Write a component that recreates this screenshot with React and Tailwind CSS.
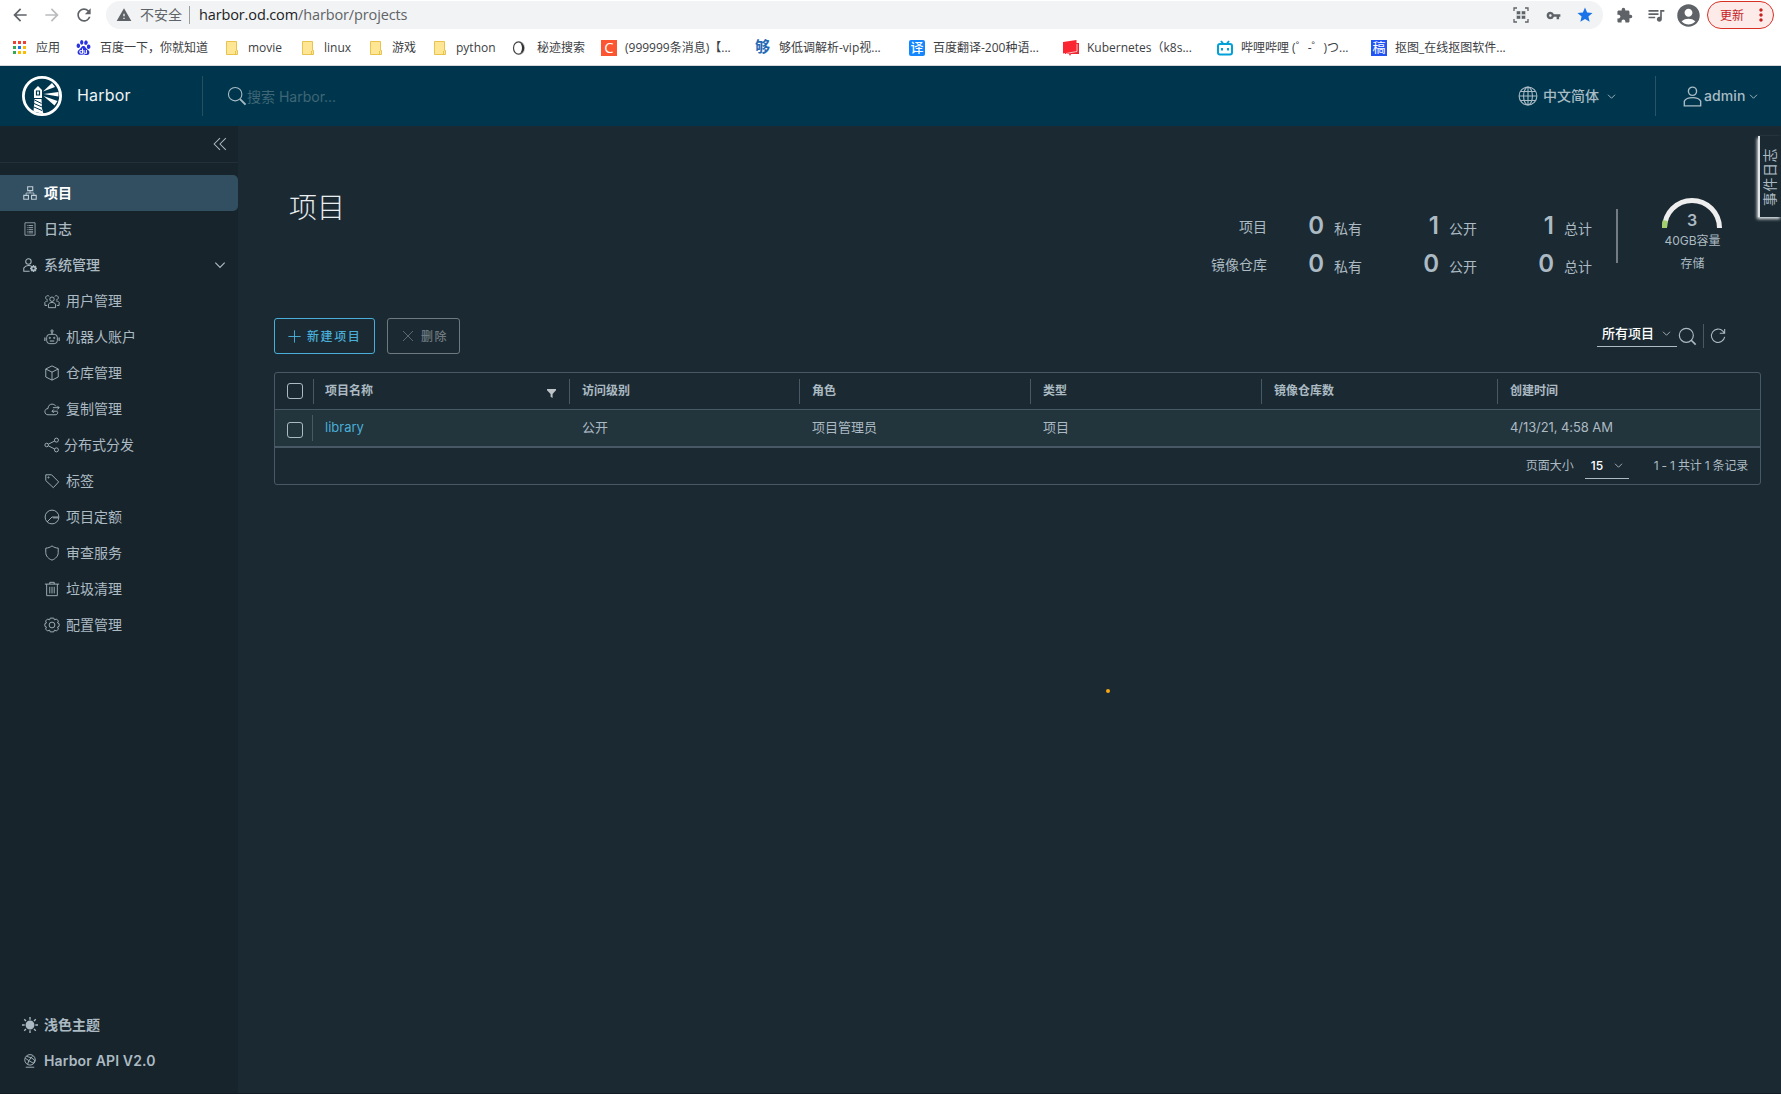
import React from 'react';
import { MdArrowBack, MdArrowForward, MdRefresh, MdWarning, MdVpnKey, MdStar, MdExtension, MdQueueMusic, MdAccountCircle, MdMoreVert } from 'react-icons/md';
import { SiBaidu } from 'react-icons/si';

function Icon({ children, className = 'h-4 w-4', width = 2 }) {
  return (
    <svg viewBox="0 0 36 36" className={`${className} shrink-0`} fill="none" stroke="currentColor" strokeWidth={width}>
      {children}
    </svg>
  );
}

function Chevron({ className }) {
  return (
    <Icon className={className} width={3.6}>
      <path d="M4 11l14 14 14-14" />
    </Icon>
  );
}

const icons = {
  projects: (
    <>
      <path d="M12 2h13v10H12zM2 24h12v10H2zM22 24h12v10H22z" strokeWidth="2.800" />
      <path d="M18 13v5M8 24v-6h20v6" />
    </>
  ),
  logs: (
    <>
      <path d="M5 2h26v32H5z" />
      <path d="M10 9h2M14 9h12M10 14h2M14 14h12M10 19h2M14 19h12M10 24h2M14 24h12M10 28h2M14 28h12" />
    </>
  ),
  admin: (
    <>
      <circle cx="14" cy="9" r="7" strokeWidth="2.600" />
      <path d="M17 34H2v-8c3-5 7-7 12-7 2 0 4 .4 6 1" strokeWidth="2.600" />
      <circle cx="27" cy="27" r="5" strokeWidth="4.500" />
      <path d="M27 18v3M27 33v3M18 27h3M33 27h3M20.600 20.600l2 2M31.400 31.400l2 2M20.600 33.400l2-2M31.400 22.600l2-2" strokeWidth="3.500" />
    </>
  ),
  users: (
    <>
      <circle cx="18" cy="14" r="5" />
      <path d="M10 33v-8c4-5 12-5 16 0v8z" />
      <path d="M12 8a4.500 4.500 0 1 0-4 7M24 8a4.500 4.500 0 1 1 4 7M7 28H2v-7c2-3 5-3 7-3M29 28h5v-7c-2-3-5-3-7-3" />
    </>
  ),
  robot: (
    <>
      <rect x="6" y="12" width="24" height="21" rx="7" />
      <path d="M18 12V7M2 19v8M34 19v8M13 27h10" strokeWidth="2.500" />
      <circle cx="18" cy="4.500" r="2.500" />
      <circle cx="13" cy="20" r="1.500" />
      <circle cx="23" cy="20" r="1.500" />
    </>
  ),
  registry: (
    <>
      <path d="M18 2l14 7v18l-14 7-14-7V9zM4 9l14 7 14-7M18 16v18" />
    </>
  ),
  replication: (
    <>
      <path d="M31 25c0 4-2 6-6 6H9c-4 0-7-3-7-7s3-7 7-7c0-6 4-10 9-10 4 0 7 2 9 5" />
      <path d="M20 15h14M30 11l4 4-4 4M31 23H18M22 19l-4 4 4 4" />
    </>
  ),
  share: (
    <>
      <circle cx="6" cy="18" r="4" />
      <circle cx="28" cy="7" r="4.500" />
      <circle cx="28" cy="29" r="4.500" />
      <path d="M10 16l14-7M10 20l14 7" />
    </>
  ),
  tag: (
    <>
      <path d="M4 4h13l16 16-12 13L4 17z" />
      <circle cx="10" cy="10" r="1.300" />
    </>
  ),
  quota: (
    <>
      <circle cx="18" cy="18" r="15.500" />
      <path d="M7 29l11-11h15" />
      <path d="M20 20h12" />
    </>
  ),
  shield: <path d="M18 2c4 3 9 5 14 5v10c0 8-6 14-14 17C10 31 4 25 4 17V7c5 0 10-2 14-5z" />,
  trash: (
    <>
      <path d="M2 7h32M6 7v26h24V7M13 7V3h10v4M13 13v15M18 13v15M23 13v15" />
    </>
  ),
  cog: (
    <>
      <circle cx="18" cy="18" r="6.500" />
      <path d="M14 2.500h8l1.500 4 4.500-2 4.500 4.500-2 4.500 3.500 1.500v6l-3.500 1.500 2 4.500-4.500 4.500-4.500-2-1.500 4h-8l-1.500-4-4.500 2L3.500 27l2-4.500L2 21v-6l3.500-1.500-2-4.500L8 4.500l4.500 2z" />
    </>
  ),
};

const subItems = [
  { icon: 'users', label: '用户管理' },
  { icon: 'robot', label: '机器人账户' },
  { icon: 'registry', label: '仓库管理' },
  { icon: 'replication', label: '复制管理' },
  { icon: 'share', label: '分布式分发' },
  { icon: 'tag', label: '标签' },
  { icon: 'quota', label: '项目定额' },
  { icon: 'shield', label: '审查服务' },
  { icon: 'trash', label: '垃圾清理' },
  { icon: 'cog', label: '配置管理' },
];

function Folder() {
  return (
    <svg viewBox="0 0 12 14" className="h-3.5 w-3">
      <path d="M.5.5h10v9h1v4H.5z" fill="#ffe694" stroke="#e8c34d" />
      <path d="M9.500 10v3.500" stroke="#e8c34d" />
    </svg>
  );
}

function AppsGrid() {
  const colors = ['#ea4335', '#ea4335', '#ea4335', '#34a853', '#1a73e8', '#fbbc04', '#34a853', '#fbbc04', '#fbbc04'];
  return (
    <div className="grid w-[13px] grid-cols-3 gap-[2px]">
      {colors.map((c, i) => (
        <span key={i} className="h-[3px] w-[3px]" style={{ backgroundColor: c }} />
      ))}
    </div>
  );
}

const bookmarks = [
  { w: 'w-[63px]', iw: 'w-[23px]', icon: <AppsGrid />, label: '应用' },
  { w: 'w-[150px]', iw: 'w-[24px]', icon: <SiBaidu className="h-[15px] w-[15px] text-[#2932e1]" />, label: '百度一下，你就知道' },
  { w: 'w-[76px]', iw: 'w-[22px]', icon: <Folder />, label: 'movie' },
  { w: 'w-[68px]', iw: 'w-[22px]', icon: <Folder />, label: 'linux' },
  { w: 'w-[64px]', iw: 'w-[22px]', icon: <Folder />, label: '游戏' },
  { w: 'w-[78px]', iw: 'w-[22px]', icon: <Folder />, label: 'python' },
  {
    w: 'w-[89px]',
    iw: 'w-[25px]',
    icon: (
      <svg viewBox="0 0 16 16" className="h-4 w-4">
        <path d="M7 1.500c8-1 8 14 0 13z" fill="#c9c9c9" />
        <ellipse cx="6.500" cy="8" rx="5" ry="6.200" fill="#fff" stroke="#444" strokeWidth="1.200" />
        <path d="M8.500 3c5 2 5 8 0 10 2-3 2-7 0-10z" fill="#333" />
      </svg>
    ),
    label: '秘迹搜索',
  },
  { w: 'w-[154px]', iw: 'w-[24px]', icon: <span className="flex h-4 w-4 items-center justify-center bg-[#fc5531] text-[15px] leading-none font-medium text-white">C</span>, label: '(999999条消息)【...' },
  { w: 'w-[154px]', iw: 'w-[24px]', icon: <span className="text-[15px] leading-none font-bold text-[#2569b5]">够</span>, label: '够低调解析-vip视...' },
  { w: 'w-[154px]', iw: 'w-[24px]', icon: <span className="flex h-4 w-4 items-center justify-center rounded-[2px] bg-[#1487ff] text-[13px] leading-none font-medium text-white">译</span>, label: '百度翻译-200种语...' },
  {
    w: 'w-[154px]',
    iw: 'w-[24px]',
    icon: (
      <svg viewBox="0 0 16 16" className="h-4 w-4">
        <path d="M4 3h12v11H8l-1 2-1-2H2z" fill="#ee2430" />
        <path d="M0 2l13.500-2v11L0 13.500z" fill="#fb2431" />
        <path d="M3 13.500l11-2V4" fill="none" stroke="#fff" strokeWidth=".7" />
      </svg>
    ),
    label: 'Kubernetes（k8s...',
  },
  {
    w: 'w-[154px]',
    iw: 'w-[24px]',
    icon: (
      <svg viewBox="0 0 16 16" className="h-4 w-4" fill="none" stroke="#00a1d6" strokeWidth="2">
        <rect x="1" y="4" width="14" height="10.500" rx="2" />
        <path d="M4 1l2 2.500M12 1l-2 2.500M5 8v2.500M11 8v2.500" />
      </svg>
    ),
    label: '哔哩哔哩 (゜-゜)つ...',
  },
  { w: 'w-[154px]', iw: 'w-[24px]', icon: <span className="flex h-4 w-4 items-center justify-center bg-[#2254f4] text-[13px] leading-none text-white">稿</span>, label: '抠图_在线抠图软件...' },
];

function Browser() {
  return (
    <div className="h-[66px] border-b border-[#d5d9dc] bg-white font-['Open_Sans','Noto_Sans_CJK_SC',sans-serif] text-[#3c4043]">
      <div className="flex h-[30px] items-center text-[#5f6368]">
        <MdArrowBack className="ml-[10px] h-5 w-5" />
        <MdArrowForward className="ml-[12px] h-5 w-5 text-[#babcbe]" />
        <MdRefresh className="ml-[12px] h-5 w-5" />
        <div className="ml-[12px] flex h-[28px] w-[1497px] items-center rounded-full bg-[#f1f3f4] text-sm whitespace-nowrap">
          <MdWarning className="ml-[10px] h-4 w-4" />
          <span className="ml-[8px]">不安全</span>
          <span className="ml-[7px] h-[18px] w-px bg-[#9a9da0]" />
          <span className="ml-[9px] text-[14.500px] tracking-[-0.130px]"><span className="text-[#202124]">harbor.od.com</span>/harbor/projects</span>
          <svg viewBox="0 0 16 16" className="ml-auto h-4 w-4" fill="none" stroke="currentColor" strokeWidth="1.300">
            <path d="M1 4V1h3M12 1h3v3M15 12v3h-3M4 15H1v-3" />
            <path d="M3.500 4h4v3.500h-4zM8.500 4h4v3.500h-4zM3.500 8.500h4V12h-4zM8.500 8.500h4V12h-4z" fill="currentColor" stroke="#f1f3f4" strokeWidth=".4" />
          </svg>
          <MdVpnKey className="ml-[17px] h-[15px] w-[15px]" />
          <MdStar className="mr-[9px] ml-[15px] h-[18px] w-[18px] text-[#1a73e8]" />
        </div>
        <MdExtension className="ml-[13px] h-[17px] w-[17px]" />
        <MdQueueMusic className="ml-[13px] h-[20px] w-[20px]" />
        <MdAccountCircle className="ml-[9px] h-[27px] w-[27px]" />
        <div className="ml-[5px] flex h-[28px] w-[67px] items-center rounded-full border border-[#d93025] bg-[#fcebe9] text-xs text-[#c5221f]">
          <span className="mt-px ml-[12px]">更新</span>
          <MdMoreVert className="ml-[7px] h-[20px] w-[20px]" />
        </div>
      </div>
      <div className="flex h-[35px] items-center pl-[13px] text-xs whitespace-nowrap">
        {bookmarks.map((b) => (
          <div key={b.label} className={`flex shrink-0 items-center ${b.w}`}>
            <span className={`shrink-0 ${b.iw}`}>{b.icon}</span>
            <span>{b.label}</span>
          </div>
        ))}
      </div>
    </div>
  );
}

function HarborLogo() {
  return (
    <svg viewBox="0 0 40 40" className="h-10 w-10">
      <circle cx="20" cy="20" r="18.600" fill="none" stroke="#fff" strokeWidth="2.800" />
      <path d="M12 16.500v-2.500l4-4 4 4v8h-8z" fill="#fff" />
      <path d="M14.500 15h3v4h-3z" fill="none" stroke="#00364d" strokeWidth="1.200" />
      <path d="M12.500 23h7l.5 9.500 1.500 5.500-10-2.500z" fill="#fff" />
      <path d="M12.500 24l7 3.500M12 27.500l8 3.500M12 31l8 3.500" stroke="#00364d" strokeWidth="1" />
      <path d="M21 15.500L30 7l3 4zM21.500 18l15-2v4.500zM21.500 20l14 5-3 4.500z" fill="#fff" />
    </svg>
  );
}

function Header() {
  return (
    <header className="flex h-[60px] items-center bg-[#00364d] whitespace-nowrap text-[#a9bcc5]">
      <div className="flex w-[203px] items-center border-r border-[#26505f] pl-[22px]">
        <HarborLogo />
        <span className="mb-[2px] ml-[15px] text-base tracking-[0.200px] text-[#eef3f5]">Harbor</span>
      </div>
      <Icon className="ml-[23px] h-[22px] w-[22px]" width={1.8}>
        <circle cx="15" cy="15" r="11" />
        <path d="M23 23l9 9" strokeWidth="3" />
      </Icon>
      <span className="mt-[2px] -ml-px text-sm text-[#3f6676]">搜索 Harbor...</span>
      <Icon className="ml-auto h-5 w-5" width={2}>
        <circle cx="18" cy="18" r="16" />
        <ellipse cx="18" cy="18" rx="8" ry="16" />
        <path d="M18 2v32M2 18h32M5 10h26M5 26h26" />
      </Icon>
      <span className="ml-[5px] text-sm font-medium">中文简体</span>
      <Chevron className="ml-[8px] h-[9px] w-[9px]" />
      <div className="ml-[39px] flex h-10 w-[126px] items-center border-l border-[#2a5465] pl-[26px]">
        <Icon className="h-[21px] w-[21px]" width={2.4}>
          <circle cx="18" cy="9" r="7" />
          <path d="M4 34v-8c4-8 24-8 28 0v8z" />
        </Icon>
        <span className="ml-px text-sm font-medium tracking-[0.100px]">admin</span>
        <Chevron className="ml-[3px] h-[9px] w-[9px]" />
      </div>
    </header>
  );
}

function Sidebar() {
  return (
    <aside className="flex w-[238px] shrink-0 flex-col bg-[#17242b] text-sm whitespace-nowrap text-[#acbac3]">
      <div className="flex h-[37px] items-center justify-end border-b border-[#21303a] pr-[11px]">
        <Icon className="mb-px h-[14px] w-[14px]" width={2.6}>
          <path d="M18 3L3 18l15 15M33 3L18 18l15 15" />
        </Icon>
      </div>
      <nav className="mt-3 flex grow flex-col">
        <div className="flex h-9 items-center rounded-r-[5px] bg-[#324f62] pl-[23px] font-bold text-white">
          <Icon className="mr-[7px] h-3.5 w-3.5 text-[#c3ced5]">{icons.projects}</Icon>
          项目
        </div>
        <div className="flex h-9 items-center pl-[23px] font-medium">
          <Icon className="mr-[7px] h-3.5 w-3.5">{icons.logs}</Icon>
          日志
        </div>
        <div className="flex h-9 items-center pr-[12px] pl-[23px] font-medium">
          <Icon className="mr-[7px] h-3.5 w-3.5">{icons.admin}</Icon>
          系统管理
          <Chevron className="ml-auto h-3 w-3" />
        </div>
        {subItems.map((item) => (
          <div key={item.icon} className="flex h-9 items-center pl-[44px]">
            <Icon className={item.icon === 'share' ? 'mr-[4px] h-4 w-4' : 'mr-[6px] h-4 w-4'}>{icons[item.icon]}</Icon>
            {item.label}
          </div>
        ))}
        <div className="mt-auto mb-[14px] font-semibold">
          <div className="flex h-9 items-center pl-[22px]">
            <Icon className="mr-[6px] h-4 w-4" width={3}>
              <circle cx="18" cy="18" r="8.500" fill="currentColor" />
              <path d="M18 0v6M18 30v6M0 18h6M30 18h6M5 5l4 4M27 27l4 4M5 31l4-4M27 9l4-4" />
            </Icon>
            浅色主题
          </div>
          <div className="flex h-9 items-center pl-[23px] tracking-[0.150px]">
            <Icon className="mr-[7px] h-3.5 w-3.5" width={2.3}>
              <circle cx="18" cy="15" r="13.500" />
              <path d="M7 34h22M6 11l9 6 9-11M15 17l-3 9M15 17l12 7 4-9M9 6l13 4 8 6" />
            </Icon>
            Harbor API V2.0
          </div>
        </div>
      </nav>
    </aside>
  );
}

const stats = [
  { label: '项目', values: [['0', '私有'], ['1', '公开'], ['1', '总计']] },
  { label: '镜像仓库', values: [['0', '私有'], ['0', '公开'], ['0', '总计']] },
];

function Summary() {
  return (
    <div className="flex whitespace-nowrap">
      <div className="mt-[81px]">
        {stats.map((row) => (
          <div key={row.label} className="flex h-[38px] items-center text-sm">
            <span className="w-[60px] pt-[2px] text-right">{row.label}</span>
            {row.values.map(([n, unit], i) => (
              <span key={unit} className={i === 0 ? 'flex w-[95px] items-baseline justify-end' : 'flex w-[115px] items-baseline justify-end'}>
                <span className="text-2xl leading-9 font-semibold">{n}</span>
                <span className="ml-[10px]">{unit}</span>
              </span>
            ))}
          </div>
        ))}
      </div>
      <div className="mt-[83px] ml-[24px] h-[54px] w-[2px] bg-[#737c82]" />
      <div className="mt-[72px] ml-[39px] flex w-[71px] flex-col items-center text-xs">
        <div className="relative mr-px h-[30px] w-[60px]">
          <svg viewBox="0 0 60 30" className="h-[30px] w-[60px]" fill="none" strokeWidth="5">
            <path d="M2.500 30a27.500 27.500 0 0 1 55 0" stroke="#eeeeee" />
            <path d="M2.500 30q0-4 .8-7.500" stroke="#a1d16b" />
          </svg>
          <span className="absolute inset-x-0 top-[10px] text-center text-base leading-6 font-semibold">3</span>
        </div>
        <span className="mt-[5px] leading-4">40GB容量</span>
        <span className="mt-[7px] leading-4">存储</span>
      </div>
    </div>
  );
}

const columns = [
  { label: '', w: 'w-[39px]' },
  { label: '项目名称', w: 'w-[256px]', value: 'library' },
  { label: '访问级别', w: 'w-[230px]', value: '公开' },
  { label: '角色', w: 'w-[231px]', value: '项目管理员' },
  { label: '类型', w: 'w-[231px]', value: '项目' },
  { label: '镜像仓库数', w: 'w-[236px]', value: '' },
  { label: '创建时间', w: 'grow', value: '4/13/21, 4:58 AM' },
];

const cellPad = (i) => (i === 0 ? 'pl-[12px]' : i === 1 ? 'pl-[11px]' : 'pl-[12px]');

function Checkbox() {
  return <span className="h-4 w-4 rounded-[3px] border border-[#acbac3]" />;
}

function ProjectTable() {
  return (
    <div className="mt-[18px] h-[113px] w-[1487px] rounded-[3px] border border-[#495865] whitespace-nowrap">
      <div className="flex h-[37px] items-center border-b border-[#495865] text-xs font-semibold">
        {columns.map((col, i) => (
          <div key={col.label} className={`flex h-[25px] items-center ${col.w} ${i === 6 ? '' : 'border-r border-[#495865]'} ${cellPad(i)}`}>
            {i === 0 ? <span className="mb-px flex"><Checkbox /></span> : col.label}
            {i === 1 && (
              <svg viewBox="0 0 10 10" className="mt-[4px] mr-[13px] ml-auto h-[9px] w-[9px]" fill="#bdc3c7">
                <path d="M0 0h10v1.500L6.200 5.500V10L4 8.500v-3L0 1.500z" />
              </svg>
            )}
          </div>
        ))}
      </div>
      <div className="flex h-[38px] items-center border-b-2 border-[#495865] bg-[#22343c] text-[13px]">
        {columns.map((col, i) => (
          <div key={col.label} className={`flex h-[26px] items-center ${col.w} ${i === 0 ? 'pr-px' : ''} ${cellPad(i)}`}>
            {i === 0 && <span className="mt-[4px] flex"><Checkbox /></span>}
            {i === 0 && <span className="ml-auto h-[26px] w-px bg-[#495865]" />}
            {i === 1 && <span className="text-[#49afd9]">{col.value}</span>}
            {i > 1 && <span className={i === 6 ? 'tracking-[-0.080px]' : 'mb-px'}>{col.value}</span>}
          </div>
        ))}
      </div>
      <div className="flex h-[36px] items-center justify-end pr-[12px] text-xs">
        <span>页面大小</span>
        <span className="mb-px ml-[11px] flex h-[27px] w-[44px] items-center border-b border-[#acbac3] pt-[2px] pl-[6px] font-medium text-white">
          15
          <Chevron className="mr-[6px] mb-[2px] ml-auto h-[9px] w-[9px] text-[#acbac3]" />
        </span>
        <span className="ml-[25px] tracking-[-0.2px]">1 - 1 共计 1 条记录</span>
      </div>
    </div>
  );
}

export default function App() {
  return (
    <div className="relative flex h-[1094px] w-[1781px] flex-col overflow-hidden bg-[#1b2a32] font-['Inter','Noto_Sans_CJK_SC',sans-serif] text-[#acbac3]">
      <Browser />
      <Header />
      <div className="flex grow border-b border-[#141c23]">
        <Sidebar />
        <main className="flex grow flex-col pl-[36px]">
          <div className="flex h-[192px] justify-between pr-[53px]">
            <h1 className="mt-[62px] pl-[15px] text-[28px] leading-10 font-light text-[#eaedf0]">项目</h1>
            <Summary />
          </div>
          <div className="flex h-9 items-center text-xs whitespace-nowrap">
            <button className="flex h-9 w-[101px] items-center rounded-[3px] border border-[#49afd9] pt-px pl-[13px] font-medium tracking-[1.600px] text-[#49afd9]">
              <Icon className="mr-[6px] mb-px h-[13px] w-[13px]" width={2.6}>
                <path d="M18 1v34M1 18h34" />
              </Icon>
              新建项目
            </button>
            <button className="ml-[12px] flex h-9 w-[73px] items-center rounded-[3px] border border-[#6f7a80] pt-px pl-[14px] font-medium tracking-[1.600px] text-[#6f7a80]">
              <Icon className="mr-[7px] mb-px h-[12px] w-[12px]" width={2.4}>
                <path d="M3 3l30 30M33 3L3 33" />
              </Icon>
              删除
            </button>
            <div className="mb-[4px] ml-auto flex h-[26px] w-[80px] items-center border-b border-[#acbac3] pl-[5px] text-[13px] font-medium text-white">
              所有项目
              <Chevron className="mr-[6px] ml-auto h-[9px] w-[9px] text-[#acbac3]" />
            </div>
            <Icon className="h-[21px] w-[21px]" width={2}>
              <circle cx="16" cy="16" r="12" />
              <path d="M24 24l8 8" strokeWidth="2.800" />
            </Icon>
            <span className="ml-[5px] h-[24px] w-px bg-[#495865]" />
            <Icon className="mr-[55px] ml-[6px] h-[16px] w-[16px]" width={2.4}>
              <path d="M33 20A15 15 0 1 1 29 7l3 4M33 2v10H22" />
            </Icon>
          </div>
          <ProjectTable />
        </main>
      </div>
      {/* vertical event log handle on the right edge */}
      <div className="absolute top-[136px] right-0 flex h-[81px] w-[23px] items-center justify-center border-l-2 border-[#dfe4e7] bg-[#1b2a32] text-sm shadow-[-1px_2px_3px_#dfe4e7]">
        <span className="-rotate-90 whitespace-nowrap tracking-[0.600px]">事件日志</span>
      </div>
      <span className="absolute top-[689px] left-[1106px] h-[4px] w-[4px] rounded-full bg-[#f7a614]" />
    </div>
  );
}
